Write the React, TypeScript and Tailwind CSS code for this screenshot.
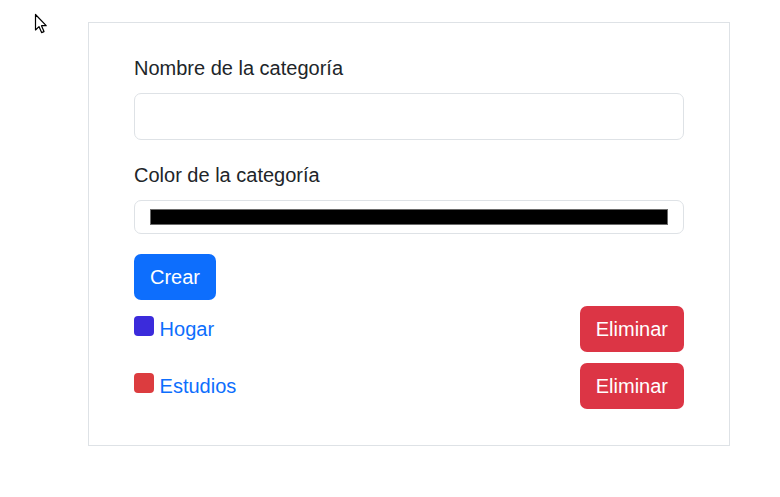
const categories = [
  { name: "Hogar", color: "bg-[#3b2bdb]" },
  { name: "Estudios", color: "bg-[#dc3c3f]" },
];

const Cursor = () => (
  <svg
    className="absolute left-[34px] top-[13px]"
    width="14"
    height="22"
    viewBox="0 0 14 22"
  >
    <path
      d="M1.5 1.5 L1.5 17 L5 13.6 L7.6 19.6 L10 18.6 L7.5 12.7 L12.2 12.7 Z"
      fill="white"
      stroke="black"
      strokeWidth="1.2"
      strokeLinejoin="round"
    />
  </svg>
);

const App = () => {
  return (
    <div
      className="relative w-[780px] h-[497px] bg-white text-[#212529] text-[20px] leading-[30px]"
      style={{ fontFamily: '"Liberation Sans", Arial, sans-serif' }}
    >
      <Cursor />
      <div className="absolute left-0 top-0 w-full pt-[22px] pl-[88px]">
        <div className="w-[642px] border border-[#dee2e6] px-[45px] pt-[30px] pb-[36px]">
          <label className="block mb-[10px]">Nombre de la categoría</label>
          <div className="h-[47px] border border-[#dee2e6] rounded-[7px]"></div>

          <label className="block mt-[20px] mb-[10px]">Color de la categoría</label>
          <div className="h-[34px] border border-[#dee2e6] rounded-[7px] pl-[15px] pr-[15px] pt-[8px]">
            <div className="h-[16px] bg-black border border-[#6b6b6b]"></div>
          </div>

          <button className="mt-[20px] block bg-[#0d6efd] text-white rounded-[7px] px-4 py-2">
            Crear
          </button>

          <div className="mt-[6px] flex flex-col gap-[11px]">
            {categories.map((c) => (
              <div key={c.name} className="flex items-center justify-between">
                <div>
                  <span className={`inline-block w-5 h-5 rounded-[4px] ${c.color}`}></span>{" "}
                  <a className="text-[#0d6efd] cursor-pointer">{c.name}</a>
                </div>
                <button className="bg-[#dc3545] text-white rounded-[7px] px-4 py-2">
                  Eliminar
                </button>
              </div>
            ))}
          </div>
        </div>
      </div>
    </div>
  );
};

export default App;
